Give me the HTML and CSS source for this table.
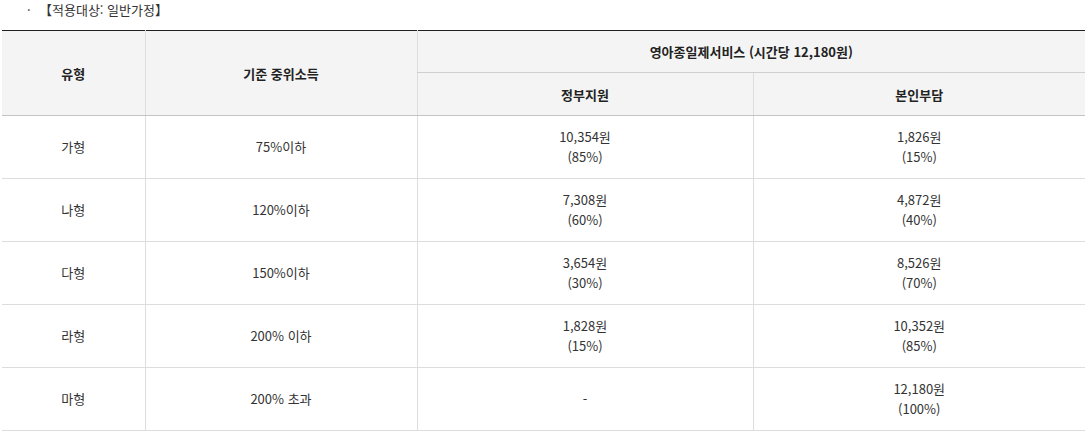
FILE: index.html
```html
<!DOCTYPE html>
<html lang="ko">
<head>
<meta charset="utf-8">
<link rel="stylesheet" href="styles.css">
</head>
<body>
<div class="page">
  <p class="note"><span class="dot">·</span><span class="label">【적용대상: 일반가정】</span></p>
  <table class="fee">
    <colgroup>
      <col class="c1"><col class="c2"><col class="c3"><col class="c4">
    </colgroup>
    <thead>
      <tr>
        <th rowspan="2">유형</th>
        <th rowspan="2">기준 중위소득</th>
        <th colspan="2" class="top">영아종일제서비스 (시간당 12,180원)</th>
      </tr>
      <tr>
        <th class="sub">정부지원</th>
        <th class="sub">본인부담</th>
      </tr>
    </thead>
    <tbody>
      <tr><td>가형</td><td>75%이하</td><td>10,354원<br>(85%)</td><td>1,826원<br>(15%)</td></tr>
      <tr><td>나형</td><td>120%이하</td><td>7,308원<br>(60%)</td><td>4,872원<br>(40%)</td></tr>
      <tr><td>다형</td><td>150%이하</td><td>3,654원<br>(30%)</td><td>8,526원<br>(70%)</td></tr>
      <tr><td>라형</td><td>200% 이하</td><td>1,828원<br>(15%)</td><td>10,352원<br>(85%)</td></tr>
      <tr><td>마형</td><td>200% 초과</td><td>-</td><td>12,180원<br>(100%)</td></tr>
    </tbody>
  </table>
</div>
</body>
</html>
```

FILE: styles.css
```css
html, body {
  margin: 0;
  padding: 0;
  background: #fff;
}
body {
  font-family: "Noto Sans CJK KR", "Noto Sans", sans-serif;
  font-size: 13px;
  color: #333;
}
.page {
  padding: 0 0 0 2px;
}
.note {
  margin: 0;
  height: 30px;
  line-height: 20px;
  padding-left: 25px;
  color: #333;
}
.dot {
  display: inline-block;
  width: 12px;
}
.fee {
  width: 1083px;
  border-collapse: collapse;
  table-layout: fixed;
  border-top: 1px solid #222;
}
.c1 { width: 143px; }
.c2 { width: 272px; }
.c3 { width: 336px; }
.c4 { width: 332px; }
.fee th {
  background: #f4f4f4;
  font-weight: bold;
  color: #222;
  height: 41px;
  padding: 0;
  text-align: center;
  vertical-align: middle;
  border-left: 1px solid #ddd;
  border-bottom: 1px solid #c4c4c4;
}
.fee th:first-child { border-left: none; }
.fee th.top { border-bottom: 1px solid #cfcfcf; }
.fee th.sub { height: 42px; }
.fee thead tr + tr th.sub:first-child { border-left: 1px solid #ddd; }
.fee td {
  height: 62px;
  padding: 0;
  text-align: center;
  vertical-align: middle;
  line-height: 20px;
  border-left: 1px solid #ddd;
  border-bottom: 1px solid #ddd;
}
.fee td:first-child { border-left: none; }
```
